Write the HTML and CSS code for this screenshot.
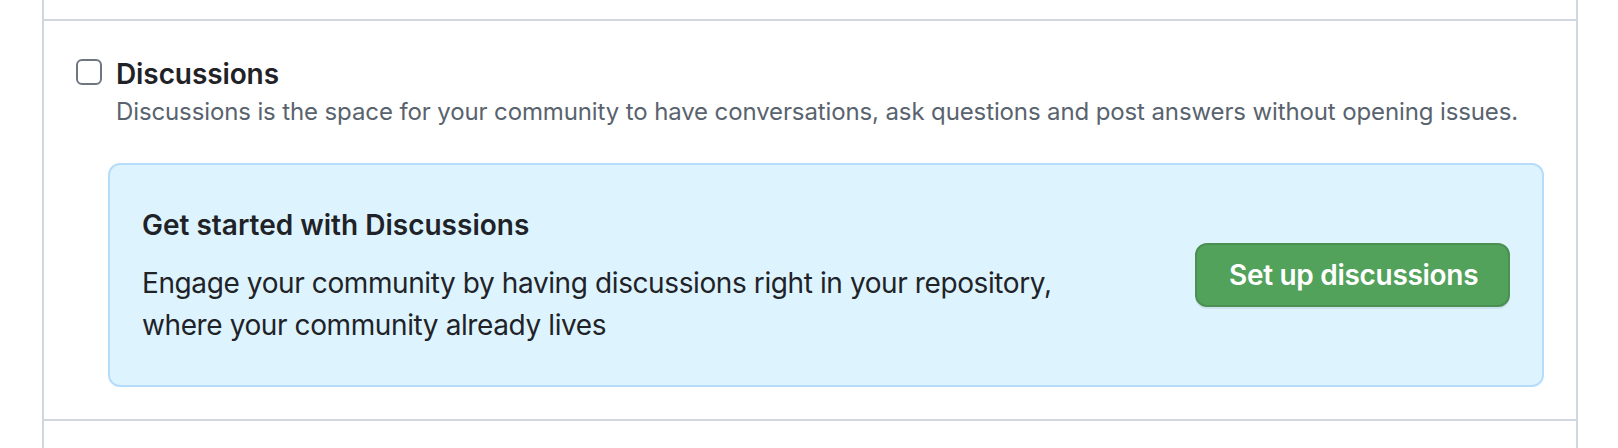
FILE: index.html
```html
<!DOCTYPE html>
<html lang="en">
<head>
<meta charset="utf-8">
<title>Discussions</title>
<link rel="stylesheet" href="styles.css">
</head>
<body>
<div class="box">
  <div class="row row-top"></div>
  <div class="row row-main">
    <div class="checkbox-field">
      <label class="check-label">
        <input type="checkbox" class="check">
        <span class="check-title">Discussions</span>
      </label>
      <p class="note">Discussions is the space for your community to have conversations, ask questions and post answers without opening issues.</p>
    </div>
    <div class="callout">
      <div class="callout-text">
        <h4 class="callout-title">Get started with Discussions</h4>
        <p class="callout-body">Engage your community by having discussions right in your repository, where your community already lives</p>
      </div>
      <button class="btn-primary" type="button">Set up discussions</button>
    </div>
  </div>
  <div class="row row-bottom"></div>
</div>
</body>
</html>
```
FILE: styles.css
```css
html, body {
  margin: 0;
  padding: 0;
  background: #ffffff;
}
body {
  font-family: Inter, "Noto Sans", "Liberation Sans", sans-serif;
  color: #1f2328;
  height: 448px;
  overflow: hidden;
}
.box {
  margin-left: 42px;
  width: 1536px;
  box-sizing: border-box;
  border-left: 2px solid #d0d7de;
  border-right: 2px solid #d0d7de;
  height: 448px;
}
.row {
  box-sizing: border-box;
}
.row-top {
  height: 21px;
  border-bottom: 2px solid #d0d7de;
}
.row-main {
  padding: 32px 32px 32px 32px;
  border-bottom: 2px solid #d0d7de;
}
.checkbox-field {
  padding-left: 40px;
}
.check-label {
  display: flex;
  align-items: flex-start;
  height: 42px;
  line-height: 42px;
  position: relative;
}
.check {
  appearance: none;
  -webkit-appearance: none;
  position: absolute;
  left: -40px;
  top: 6px;
  margin: 0;
  width: 26px;
  height: 26px;
  box-sizing: border-box;
  border: 2px solid #6e7781;
  border-radius: 6px;
  background: #ffffff;
}
.check-title {
  font-size: 28px;
  font-weight: 600;
  color: #1f2328;
  letter-spacing: -0.1px;
}
.note {
  margin: 4px 0 0 0;
  font-size: 24px;
  line-height: 26px;
  color: #59636e;
  letter-spacing: -0.12px;
}
.callout {
  margin: 38px 0 0 32px;
  display: flex;
  align-items: center;
  justify-content: space-between;
  background: #ddf4ff;
  border: 2px solid #b6dcfb;
  border-radius: 12px;
  padding: 39px 32px;
}
.callout-text {
  width: 940px;
}
.callout-title {
  margin: 0 0 16px 0;
  font-size: 28px;
  line-height: 42px;
  font-weight: 600;
  color: #1f2328;
}
.callout-body {
  margin: 0;
  font-size: 28px;
  line-height: 42px;
  color: #1f2328;
  letter-spacing: -0.4px;
}
.btn-primary {
  height: 64px;
  width: 315px;
  box-sizing: border-box;
  padding: 0 32px;
  background: #53a25b;
  border: 2px solid #4b8f53;
  border-radius: 12px;
  color: #ffffff;
  font-family: Inter, "Noto Sans", "Liberation Sans", sans-serif;
  font-size: 28px;
  font-weight: 600;
  letter-spacing: -0.3px;
  box-shadow: 0 2px 0 rgba(31, 35, 40, 0.08);
  white-space: nowrap;
}
```
